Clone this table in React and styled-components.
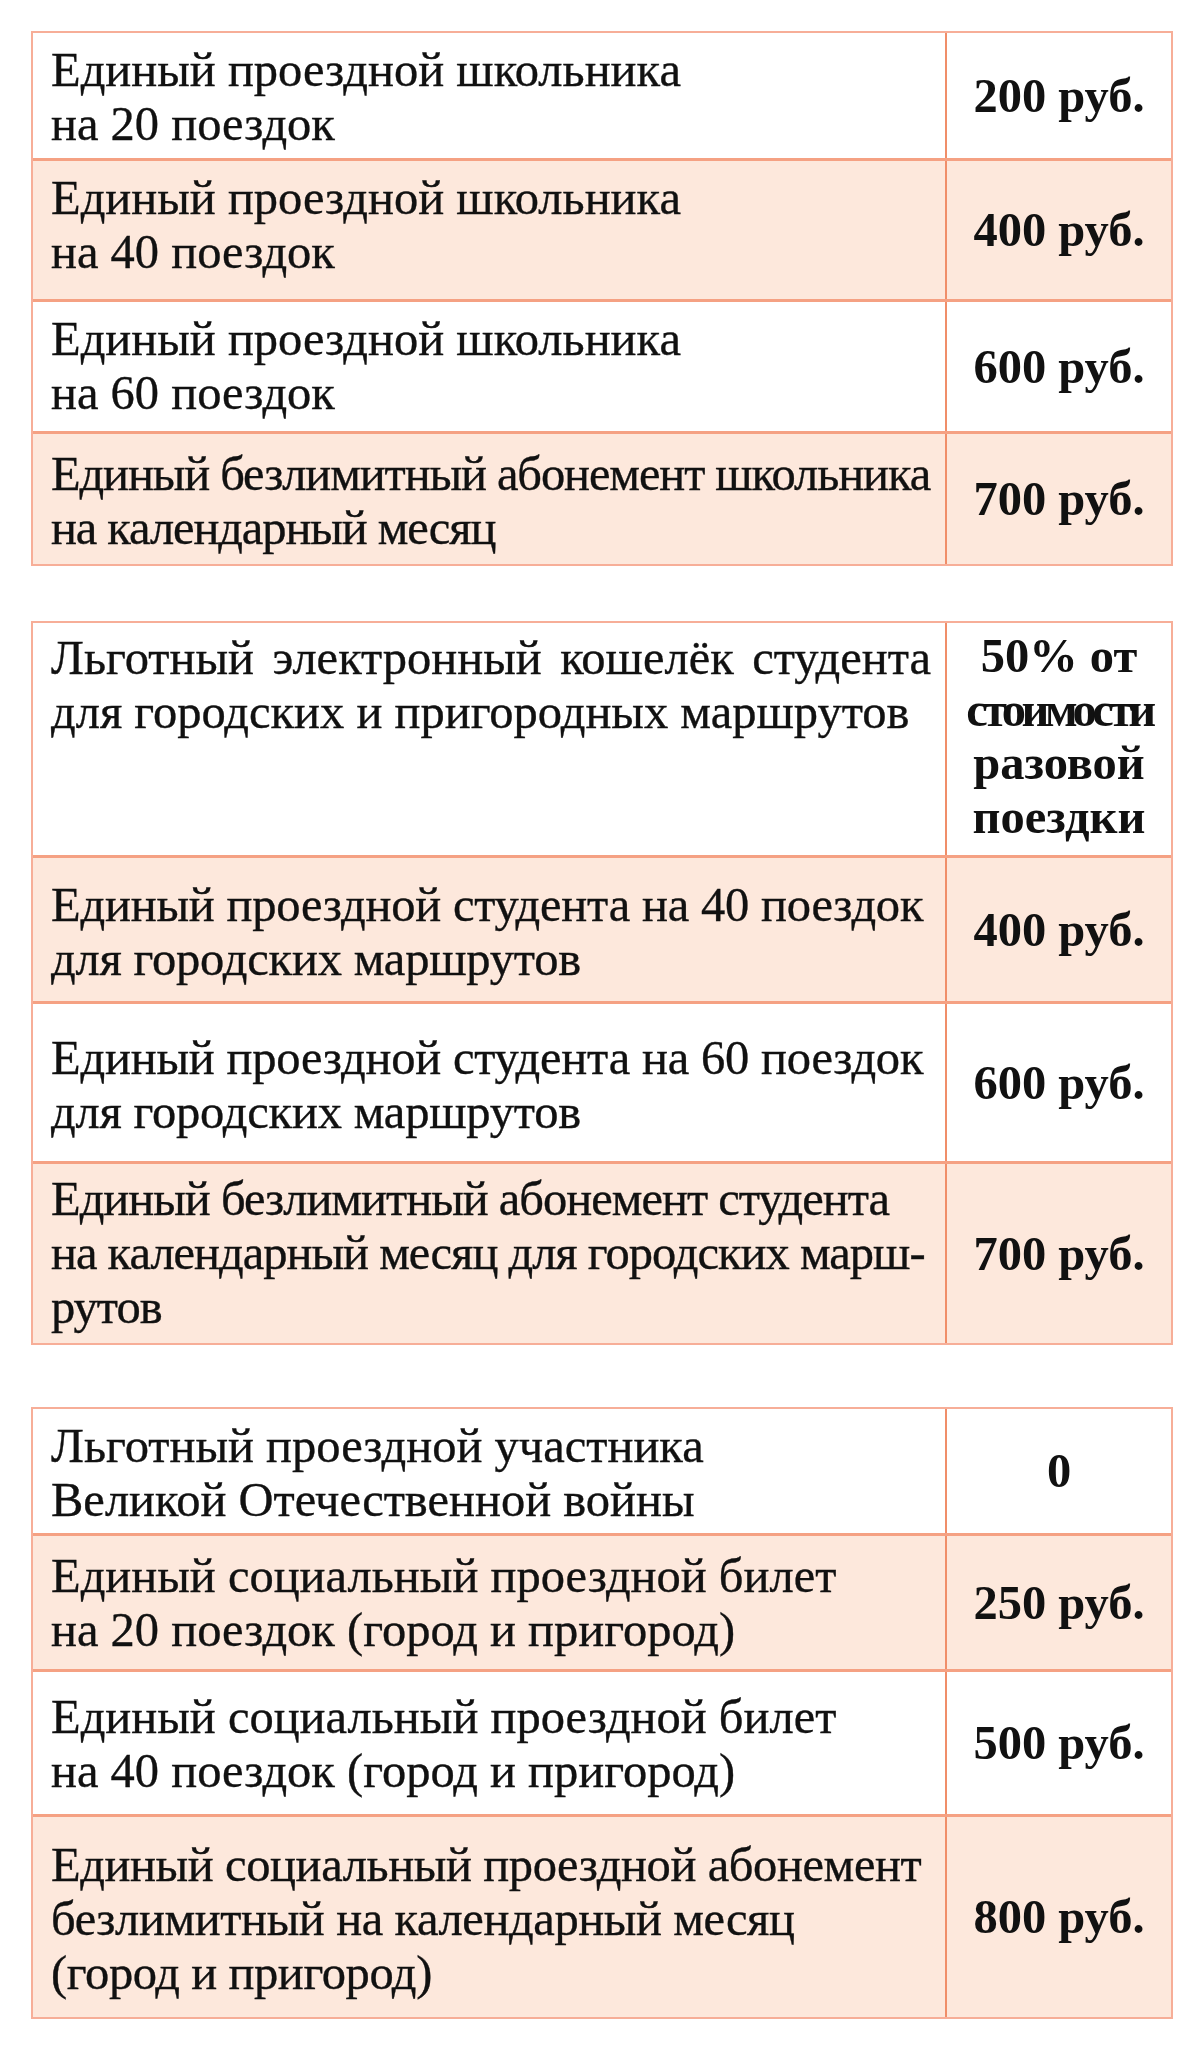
import React from "react";
import styled, { createGlobalStyle } from "styled-components";

const Global = createGlobalStyle`
  html, body {
    margin: 0;
    padding: 0;
    background: #ffffff;
  }
  body {
    font-family: "Liberation Serif", "Times New Roman", serif;
    color: #111;
  }
`;

const Page = styled.div`
  width: 1200px;
  padding: 31px 0 20px 31px;
  box-sizing: border-box;
  display: flex;
  flex-direction: column;
`;

const Table = styled.div`
  width: 1142px;
  margin-bottom: ${(p) => p.gap || 0}px;
  border: 2px solid #f7ae98;
  box-sizing: border-box;
  display: flex;
  flex-direction: column;
`;

const Row = styled.div`
  display: grid;
  grid-template-columns: 1fr 224px;
  height: ${(p) => p.h}px;
  background: ${(p) => (p.shaded ? "#fde8dc" : "#ffffff")};
  border-top: ${(p) => (p.first ? "none" : "3px solid #f5a183")};
  box-sizing: border-box;
`;

const Name = styled.div`
  padding: ${(p) => p.pt}px 2px 0 18px;
  font-size: 48.5px;
  line-height: 54px;
  letter-spacing: ${(p) => p.ls || 0}px;
  text-align: ${(p) => (p.justify ? "justify" : "left")};
  padding-right: ${(p) => (p.justify ? 14 : 2)}px;
  -webkit-text-stroke: 0.35px #111;
  border-right: 2px solid #f08e69;
  white-space: ${(p) => (p.justify ? "normal" : "pre")};
  overflow: hidden;
`;

const Price = styled.div`
  display: flex;
  flex-direction: column;
  align-items: center;
  justify-content: ${(p) => (p.top ? "flex-start" : "center")};
  text-align: center;
  padding-top: ${(p) => (p.top ? 6 : 0)}px;
  font-size: 48.5px;
  line-height: 53.5px;
  font-weight: bold;
  overflow: hidden;
`;

const PriceLine = styled.span`
  white-space: nowrap;
  letter-spacing: ${(p) => p.ls || 0}px;
`;

const tables = [
  {
    gap: 55,
    rows: [
      { h: 125, pt: 10, name: "Единый проездной школьника\nна 20 поездок", price: ["200 руб."] },
      { h: 141, pt: 10, name: "Единый проездной школьника\nна 40 поездок", price: ["400 руб."] },
      { h: 132, pt: 10, name: "Единый проездной школьника\nна 60 поездок", price: ["600 руб."] },
      { h: 133, pt: 13, name: "Единый безлимитный абонемент школьника\nна календарный месяц", price: ["700 руб."], ls: -1.1 },
    ],
  },
  {
    gap: 62,
    rows: [
      {
        h: 232,
        pt: 8,
        name: "Льготный электронный кошелёк студента для городских и пригородных маршрутов",
        justify: true,
        price: ["50% от", "стоимости", "разовой", "поездки"],
        top: true,
      },
      { h: 146, pt: 20, name: "Единый проездной студента на 40 поездок\nдля городских маршрутов", price: ["400 руб."], ls: -0.2 },
      { h: 160, pt: 27, name: "Единый проездной студента на 60 поездок\nдля городских маршрутов", price: ["600 руб."], ls: -0.2 },
      { h: 182, pt: 8, name: "Единый безлимитный абонемент студента\nна календарный месяц для городских марш-\nрутов", price: ["700 руб."], ls: -1.0 },
    ],
  },
  {
    rows: [
      { h: 124, pt: 10, name: "Льготный проездной участника\nВеликой Отечественной войны", price: ["0"] },
      { h: 136, pt: 13, name: "Единый социальный проездной билет\nна 20 поездок (город и пригород)", price: ["250 руб."] },
      { h: 145, pt: 18, name: "Единый социальный проездной билет\nна 40 поездок (город и пригород)", price: ["500 руб."] },
      { h: 203, pt: 21, name: "Единый социальный проездной абонемент\nбезлимитный на календарный месяц\n(город и пригород)", price: ["800 руб."], ls: -0.4 },
    ],
  },
];

// the narrow "стоимости" line is squeezed in the original
const squeeze = { "стоимости": -4.6 };

export default function App() {
  return (
    <>
      <Global />
      <Page>
        {tables.map((t, ti) => (
          <Table key={ti} gap={t.gap}>
            {t.rows.map((r, i) => (
              <Row key={i} h={r.h} shaded={i % 2 === 1} first={i === 0}>
                <Name ls={r.ls} pt={r.pt} justify={r.justify}>
                  {r.name}
                </Name>
                <Price top={r.top}>
                  {r.price.map((line) => (
                    <PriceLine key={line} ls={squeeze[line]}>
                      {line}
                    </PriceLine>
                  ))}
                </Price>
              </Row>
            ))}
          </Table>
        ))}
      </Page>
    </>
  );
}
